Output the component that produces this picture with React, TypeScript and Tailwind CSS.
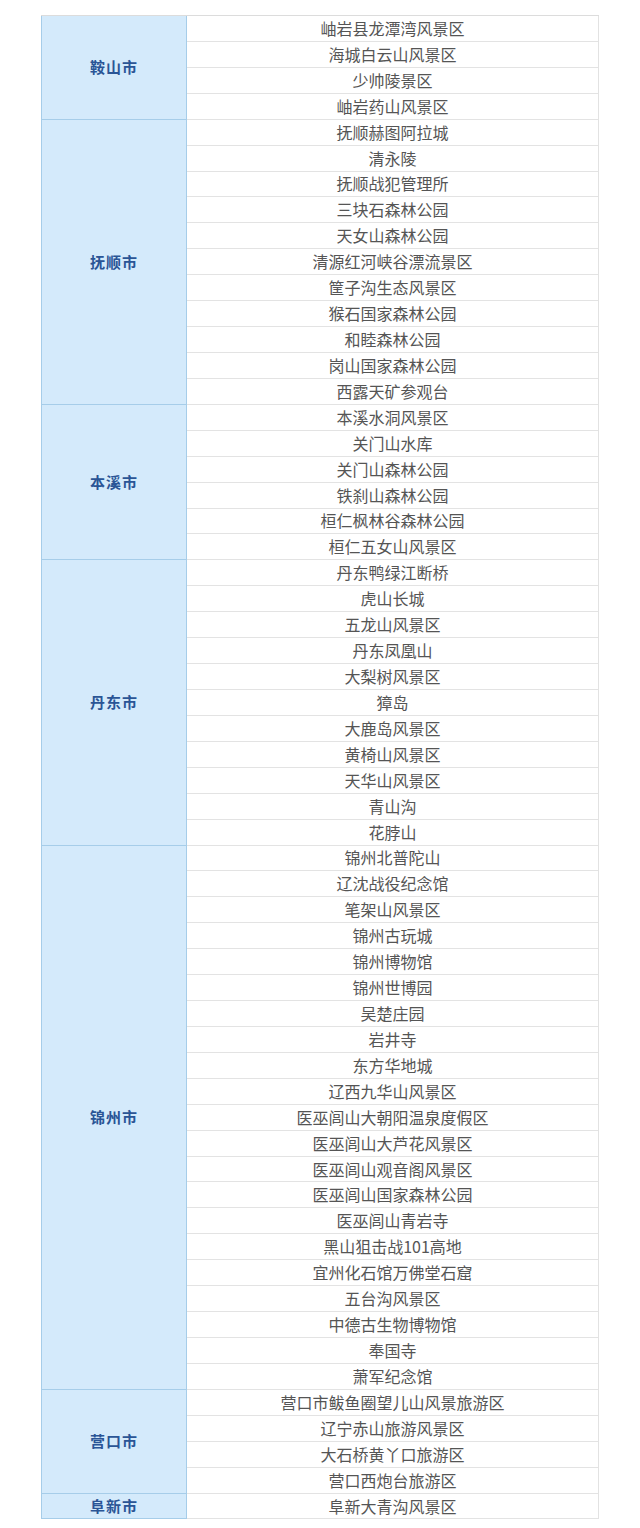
import React from "react";

const groups: { city: string; items: string[] }[] = [
  { city: "鞍山市", items: ["岫岩县龙潭湾风景区", "海城白云山风景区", "少帅陵景区", "岫岩药山风景区"] },
  {
    city: "抚顺市",
    items: [
      "抚顺赫图阿拉城",
      "清永陵",
      "抚顺战犯管理所",
      "三块石森林公园",
      "天女山森林公园",
      "清源红河峡谷漂流景区",
      "筐子沟生态风景区",
      "猴石国家森林公园",
      "和睦森林公园",
      "岗山国家森林公园",
      "西露天矿参观台",
    ],
  },
  {
    city: "本溪市",
    items: ["本溪水洞风景区", "关门山水库", "关门山森林公园", "铁刹山森林公园", "桓仁枫林谷森林公园", "桓仁五女山风景区"],
  },
  {
    city: "丹东市",
    items: [
      "丹东鸭绿江断桥",
      "虎山长城",
      "五龙山风景区",
      "丹东凤凰山",
      "大梨树风景区",
      "獐岛",
      "大鹿岛风景区",
      "黄椅山风景区",
      "天华山风景区",
      "青山沟",
      "花脖山",
    ],
  },
  {
    city: "锦州市",
    items: [
      "锦州北普陀山",
      "辽沈战役纪念馆",
      "笔架山风景区",
      "锦州古玩城",
      "锦州博物馆",
      "锦州世博园",
      "吴楚庄园",
      "岩井寺",
      "东方华地城",
      "辽西九华山风景区",
      "医巫闾山大朝阳温泉度假区",
      "医巫闾山大芦花风景区",
      "医巫闾山观音阁风景区",
      "医巫闾山国家森林公园",
      "医巫闾山青岩寺",
      "黑山狙击战101高地",
      "宜州化石馆万佛堂石窟",
      "五台沟风景区",
      "中德古生物博物馆",
      "奉国寺",
      "萧军纪念馆",
    ],
  },
  {
    city: "营口市",
    items: ["营口市鲅鱼圈望儿山风景旅游区", "辽宁赤山旅游风景区", "大石桥黄丫口旅游区", "营口西炮台旅游区"],
  },
  { city: "阜新市", items: ["阜新大青沟风景区"] },
];

export default function App() {
  return (
    <div
      className="w-[640px] h-[1528px] bg-white pt-[15px] pl-[41px]"
      style={{ fontFamily: '"Noto Sans CJK SC", "Noto Sans", sans-serif' }}
    >
      <div className="w-[558px] border-t border-[#dcdcdc]">
        {groups.map((g, gi) => (
          <div key={gi} className="flex">
            <div className="w-[146px] shrink-0 bg-[#d4eafb] border-l border-r border-b border-[#a6cde9] flex items-center justify-center">
              <span className="text-[15px] font-bold text-[#2a5596] tracking-[1px]">{g.city}</span>
            </div>
            <div className="flex-1 border-r border-[#e2e2e2]">
              {g.items.map((it, i) => (
                <div
                  key={i}
                  className="h-[25.93px] border-b border-[#e3e3e3] flex items-center justify-center text-[16px] text-[#555555] leading-none pb-[1px]"
                >
                  {it}
                </div>
              ))}
            </div>
          </div>
        ))}
      </div>
    </div>
  );
}
